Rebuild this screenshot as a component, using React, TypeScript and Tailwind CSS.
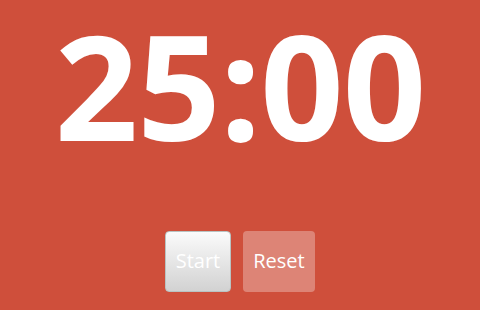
import React from 'react';

const App: React.FC = () => {
  return (
    <div
      className="w-[480px] h-[310px] bg-[#cf4f3b] flex flex-col items-center overflow-hidden"
      style={{ fontFamily: '"Open Sans", "Noto Sans", sans-serif' }}
    >
      <div className="mt-[5px] text-[146px] leading-[1.1] font-bold text-white tracking-[-1px]">
        25:00
      </div>
      <div className="mt-[65px] flex gap-[12px]">
        <button className="w-[66px] h-[61px] rounded-[4px] border border-[#b9c3c2] bg-gradient-to-b from-[#fbfbfb] to-[#d2d2d2] text-white text-[20px]">
          Start
        </button>
        <button className="w-[72px] h-[61px] rounded-[4px] bg-white/30 text-white text-[20px]">
          Reset
        </button>
      </div>
    </div>
  );
};

export default App;
